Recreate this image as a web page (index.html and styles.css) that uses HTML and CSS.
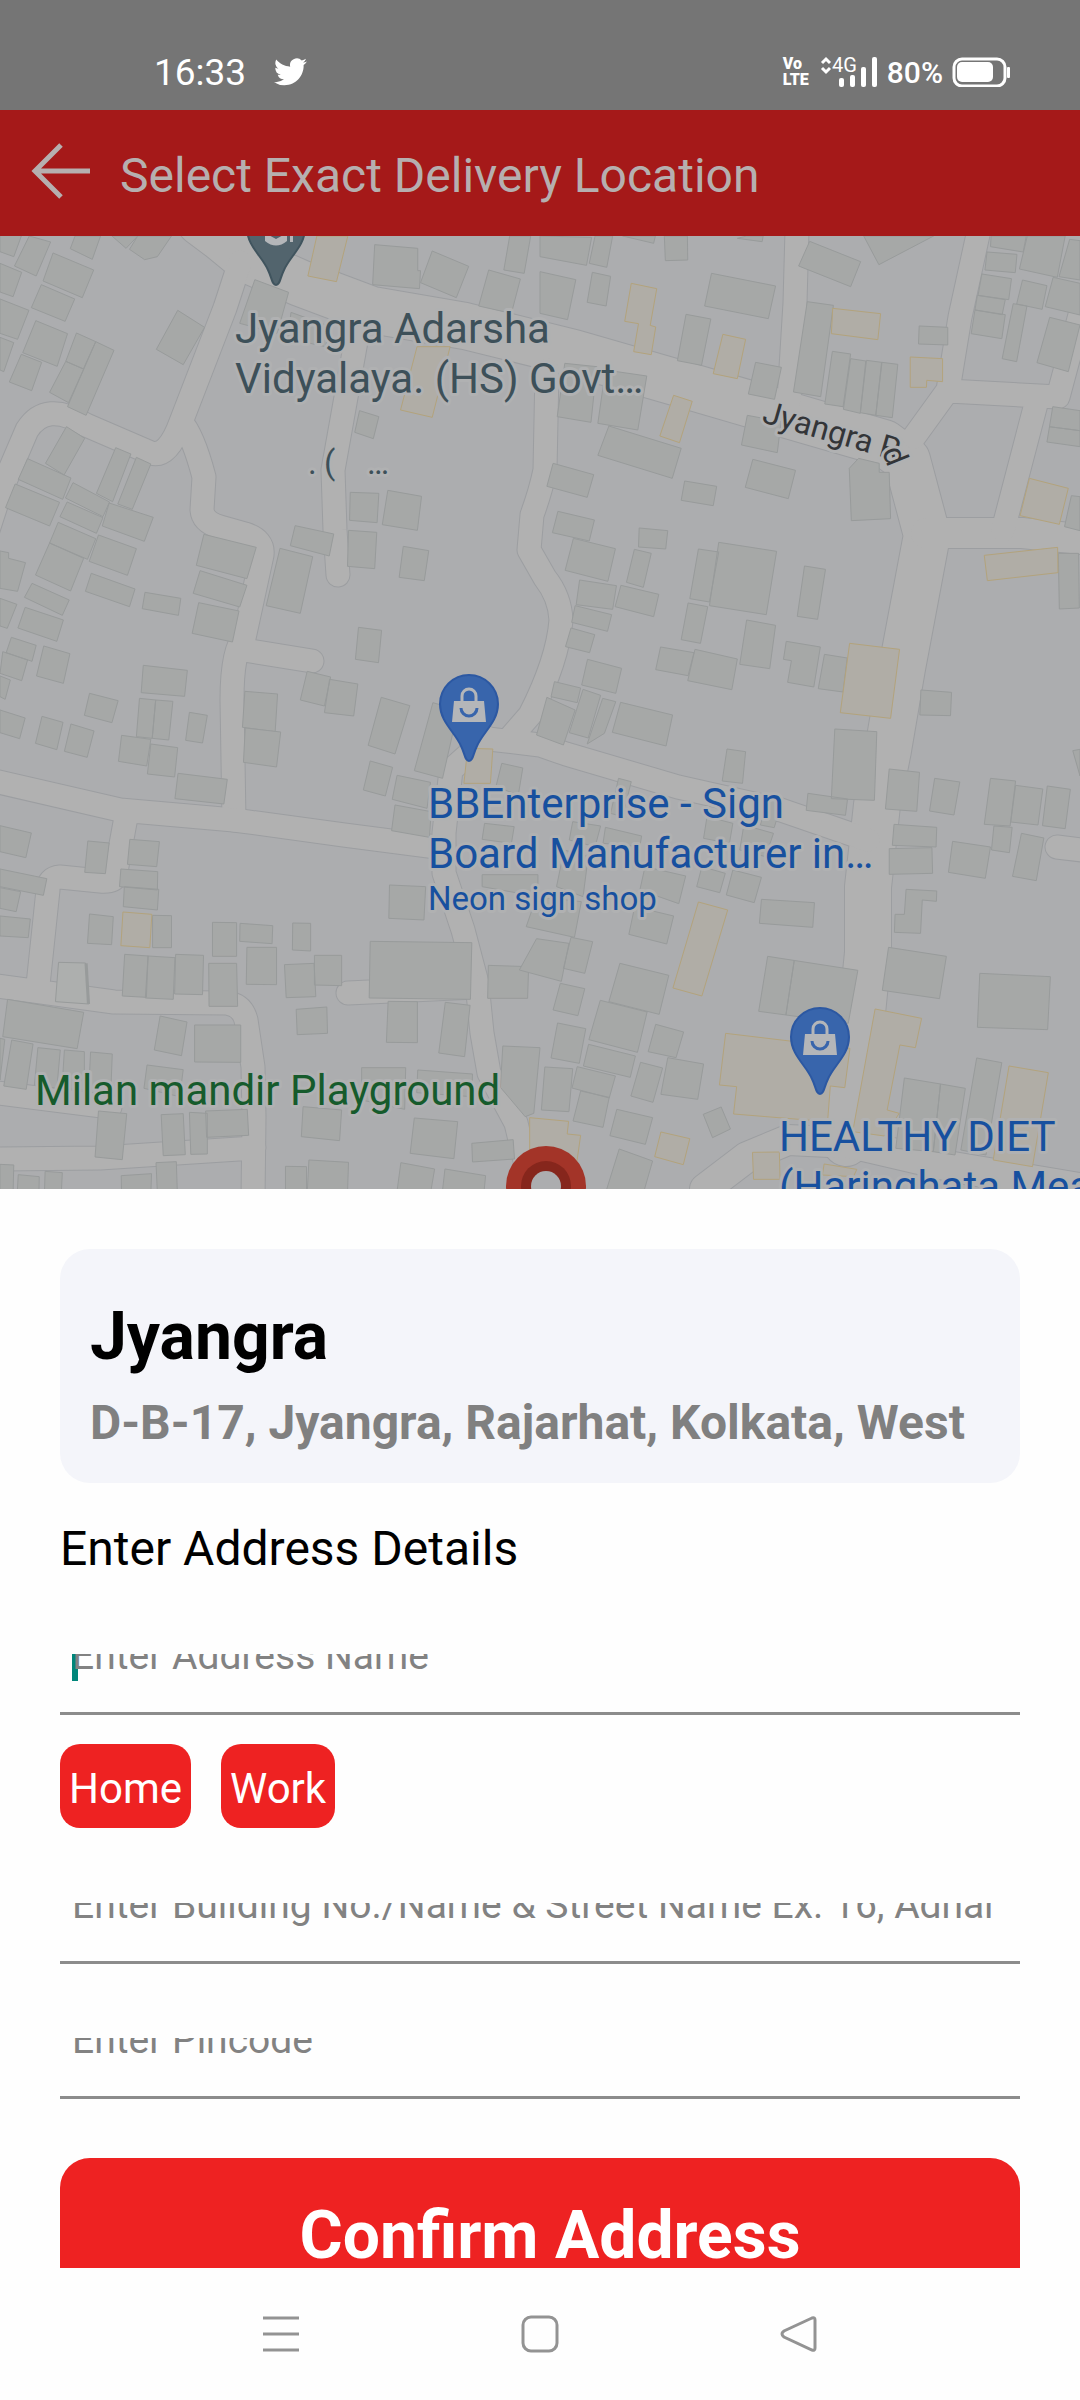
FILE: index.html
```html
<!DOCTYPE html>
<html lang="en">
<head>
<meta charset="utf-8">
<meta name="viewport" content="width=device-width, initial-scale=1">
<title>Select Exact Delivery Location</title>
<link rel="stylesheet" href="styles.css">
</head>
<body>
<div class="status-bar">
  <div class="status-left">
    <time>16:33</time>
    <svg class="bird" viewBox="0 0 24 20" aria-hidden="true"><path d="M23.950 2.400a10 10 0 0 1-2.820.78 4.950 4.950 0 0 0 2.160-2.730c-.95.560-2 .97-3.130 1.190a4.920 4.920 0 0 0-8.380 4.480C7.690 5.920 4.070 3.960 1.640.98a4.920 4.920 0 0 0 1.520 6.570 4.900 4.900 0 0 1-2.230-.61v.06a4.920 4.920 0 0 0 3.950 4.830 5 5 0 0 1-2.210.08 4.940 4.940 0 0 0 4.600 3.420A9.870 9.870 0 0 1 0 17.370a14 14 0 0 0 7.550 2.210c9.050 0 14-7.500 14-13.980 0-.21 0-.42-.02-.63a9.940 9.940 0 0 0 2.420-2.570z"/></svg>
  </div>
  <div class="status-right">
    <span class="volte"><span>Vo</span><span>LTE</span></span>
    <svg class="signal" viewBox="0 0 57 32" aria-hidden="true">
      <path class="arrows" d="M1 7l4-4 4 4M1 12l4 4 4-4"/>
      <text x="11" y="16">4G</text>
      <rect x="18" y="22" width="5" height="9" rx="2"/><rect x="29" y="19" width="5" height="12" rx="2"/><rect x="40" y="11" width="5" height="20" rx="2"/><rect x="51" y="1" width="5" height="30" rx="2"/>
    </svg>
    <span class="charge">80%</span>
    <svg class="battery" viewBox="0 0 58 30" aria-hidden="true"><rect class="case" x="2" y="2" width="51" height="27" rx="8"/><rect x="5" y="5" width="36" height="20" rx="5"/><rect x="55" y="10" width="3" height="11" rx="1"/></svg>
  </div>
</div>
<header class="app-bar">
  <button class="back" type="button" aria-label="Back"><svg viewBox="0 0 60 56"><path d="M58 26H3M29 0L3 26l26 26"/></svg></button>
  <h1>Select Exact Delivery Location</h1>
</header>
<svg class="map" viewBox="0 236 1080 953" preserveAspectRatio="xMidYMid slice" role="img" aria-label="Map of Jyangra">
  <defs>
    <g id="roads">
      <path class="wide" d="M200 222L220 237 248 260 300 283 372 310 465 326 574 353 678 383 815 423 884 443 907 460 927 535 902 668 888 750 877 805 868 887 868 953 860 1033 846 1143"/>
      <path class="mid" d="M705 1189L747 1157 788 1140 850 1143 953 1167 1090 1190M926 533L1022 533 1090 540"/>
      <path d="M240 262L225 308 181 422Q168 458 151 453L86 425Q46 400 27 430L0 493-12 530M181 422Q193 435 204 477L202 510Q203 522 220 527L245 534Q264 540 262 555L244 638Q232 650 232 700L234 820M244 650L312 661"/>
      <path d="M358 330L333 470 335 530 338 575M979 230L960 317 948 390 914 437M948 391L1058 397 1084 300M1037 400L1003 530M797 230L795 303 789 400"/>
      <path d="M547 370L545 470Q541 490 532 515L529 550 545 578Q560 597 561 620 558 660 530 715L510 738M480 738L540 745 566 754 678 787 781 810 868 840M487 738L451 770 444 833 444 873 463 930 477 983 482 1033 489 1073 516 1123 532 1190"/>
      <path d="M-10 780L120 810 234 820 344 835 444 848M126 817L115 877Q113 882 100 881L60 877Q48 878 48 890L38 985M-10 985L114 1002 227 1003Q242 1005 246 1020L253 1067 254 1117 253 1200M-10 1159L100 1158 254 1148M-10 1092L110 1107M348 993L475 987M1057 847L1090 851"/>
    </g>
    <path id="pin" d="M0 57C-4 57-4 50-8 42-14 28-29 18-29 0A29 29 0 0 1 29 0C29 18 14 28 8 42 4 50 4 57 0 57z"/>
    <g id="shop">
      <use href="#pin" class="pin-shop"/>
      <path class="glyph" d="M-15-3H15L17 18H-17z"/>
      <path class="handle" d="M-7-3V-8A7 7 0 0 1 7-8V-3"/>
      <path class="smile" d="M-8 4A8 8 0 0 0 8 4"/>
    </g>
  </defs>
  <rect class="land" x="-600" y="0" width="2400" height="2000"/>
  <use href="#roads" class="road-casing"/>
  <use href="#roads" class="road-fill"/>

  <g transform="translate(0 230) scale(.34439 .33333)">
    <path class="building" d="M0 65 40 80 62 18 0 0zM42 108 105 138 147 36 85 18zM204 56 268 88 292 18 218 18zM325 18 366 55 400 18zM376 58 420 89 457 80 498 18 400 18zM0 100 63 127 38 200 0 186zM154 69 272 120 239 203 125 153zM120 164 217 207 189 274 91 233zM0 207 84 241 51 328 0 310zM104 272 196 311 166 409 66 368zM222 309 278 335 242 417 191 394zM278 335 331 361 250 556 196 530zM191 394 243 417 199 518 144 487zM0 322 40 338 11 425 0 420zM62 373 121 397 92 482 27 456zM516 241 594 292 532 404 454 358zM740 149 838 187 805 310 696 280zM193 590 246 625 186 735 132 700zM336 653 380 672 327 815 280 790zM396 682 438 702 384 838 342 822zM80 686 206 744 182 808 53 748zM44 762 173 817 144 888 16 833zM212 758 318 816 299 860 190 804zM195 816 299 863 280 910 174 860zM317 819 445 862 419 934 297 888zM169 877 278 926 254 988 144 939zM144 939 243 985 205 1083 103 1035zM286 915 396 956 370 1036 259 994zM0 963 25 968 25 985 74 998 51 1084 0 1075zM265 1030 392 1077 376 1130 248 1084zM93 1060 201 1110 181 1156 71 1102zM0 1105 49 1123 21 1195 0 1188zM73 1132 184 1170 165 1234 52 1194zM33 1222 105 1246 93 1294 18 1268zM8 1265 80 1290 63 1352 0 1330zM127 1248 203 1271 184 1360 106 1338zM0 1338 30 1350 15 1408 0 1400zM260 1390 343 1412 325 1478 245 1456zM416 1306 544 1321 536 1399 410 1388zM405 1405 452 1410 442 1525 396 1520zM452 1410 502 1414 490 1530 442 1525zM421 1087 525 1105 518 1156 413 1136zM592 913 744 952 717 1046 570 1006zM581 1022 717 1066 696 1131 561 1090zM577 1118 694 1143 675 1236 558 1210zM711 1384 806 1392 799 1505 704 1492zM813 955 908 980 872 1150 773 1127zM857 887 969 912 956 978 843 947zM1017 787 1100 790 1095 878 1015 871zM1126 781 1224 799 1212 901 1110 884zM1012 901 1094 907 1088 1016 1009 1009zM1171 949 1245 962 1232 1052 1159 1042zM1041 1192 1108 1201 1099 1298 1032 1288zM1044 542 1100 560 1084 626 1030 607zM892 1324 960 1341 942 1428 872 1410zM957 1348 1039 1362 1027 1458 942 1448zM1107 1402 1190 1427 1147 1572 1069 1546zM1088 44 1213 55 1213 122 1221 122 1218 176 1082 164zM1255 63 1361 109 1325 203 1221 158zM1419 120 1511 147 1485 250 1390 228zM1480 18 1541 18 1522 130 1463 120zM1257 1418 1203 1622 1285 1645 1330 1440zM845 247 960 290 945 350 835 325z"/>
    <path class="landmark" d="M920 18 1010 18 977 155 894 138zM1211 350 1307 350 1255 562 1163 540z"/>
  </g>
  <g transform="translate(540 230) scale(.34439 .33333)">
    <path class="building" d="M0 18 150 22 135 106 0 80zM160 18 211 18 194 112 143 100zM240 18 335 18 330 40zM361 18 428 18 429 90 364 92zM573 25 645 35 648 18 600 18zM0 125 104 149 80 269 0 250zM152 127 205 139 192 228 137 217zM498 130 684 168 663 266 478 228zM424 253 496 267 469 406 399 392zM626 397 701 412 681 508 605 492zM783 34 931 95 902 170 751 108zM940 18 984 104 1143 18zM776 215 852 226 815 500 736 486zM849 364 902 372 880 530 827 522zM902 386 946 393 930 550 881 538zM948 391 992 397 975 556 930 548zM993 397 1039 403 1023 563 975 556zM1101 288 1184 292 1184 345 1099 342zM1310 18 1412 18 1403 66 1308 50zM1298 66 1385 73 1380 128 1292 120zM1283 132 1369 146 1361 209 1272 196zM1270 196 1351 209 1342 254 1263 240zM1263 240 1351 254 1341 326 1252 311zM1415 18 1525 18 1502 142 1392 117zM1538 28 1568 32 1568 150 1507 140zM1490 142 1568 160 1568 255 1467 230zM1401 150 1472 167 1458 238 1384 222zM1374 221 1414 228 1384 395 1342 386zM1480 262 1568 285 1534 425 1443 398zM72 400 165 410 148 577 50 560zM190 420 310 438 284 600 168 580zM200 588 410 655 384 745 168 676zM38 700 156 734 137 802 20 769zM420 753 513 769 503 827 410 811zM618 688 742 721 721 806 596 772zM602 556 700 575 689 668 585 645zM925 685 985 700 985 727 1014 727 1018 866 904 872 898 715zM52 844 158 870 143 933 36 908zM288 894 371 902 365 957 286 951zM97 925 219 956 197 1054 73 1021zM274 958 323 970 300 1072 251 1057zM460 957 519 966 492 1116 435 1106zM519 937 687 964 657 1154 492 1127zM768 1008 829 1018 806 1168 747 1159zM115 1050 222 1067 211 1138 105 1124zM235 1066 345 1093 330 1160 218 1130zM102 1127 208 1154 196 1204 92 1177zM90 1194 159 1214 144 1268 74 1250zM430 1119 487 1130 466 1240 410 1229zM600 1170 684 1186 667 1316 580 1303zM350 1251 447 1268 430 1337 336 1319zM450 1258 573 1287 557 1379 429 1352zM138 1288 237 1315 220 1390 121 1365zM715 1234 814 1251 795 1371 719 1357 730 1292 707 1288zM826 1273 892 1284 880 1386 808 1376zM1106 1380 1195 1387 1192 1457 1103 1455zM1489 530 1568 542 1568 650 1472 636zM1478 590 1568 602zM1543 797 1568 800 1568 902 1523 890zM1505 970 1564 970 1566 1134 1508 1137zM42 1355 118 1374 108 1418 32 1400zM20 1402 102 1440 68 1545-10 1515zM125 1378 176 1396 140 1524 85 1508zM182 1405 220 1415 187 1510 137 1542zM234 1417 385 1455 366 1548 210 1507z"/>
    <path class="landmark" d="M265 160 339 176 320 286 336 291 323 374 272 365 286 281 246 274zM531 313 597 328 573 446 503 431zM388 496 442 514 405 638 348 618zM850 235 989 251 981 329 846 311zM1075 381 1169 386 1169 455 1123 451 1122 472 1075 472zM1421 745 1534 775 1508 883 1394 857zM1290 976 1503 952 1504 1028 1299 1052zM899 1240 1044 1258 1018 1465 872 1448z"/>
  </g>
  <g transform="translate(0 700) scale(.34439 .33333)">
    <path class="building" d="M0 30 73 54 57 116 0 98zM122 49 183 67 165 149 103 130zM206 72 273 93 253 172 187 154zM353 106 438 118 426 198 344 184zM438 132 516 143 507 231 428 222zM550 37 602 46 588 129 539 121zM517 220 660 238 650 312 508 296zM712 84 815 96 803 201 707 187zM1075 183 1140 202 1119 288 1055 270zM1153 226 1250 247 1240 325 1139 298zM1147 315 1252 335 1247 412 1137 392zM0 377 91 399 75 473 0 455zM255 423 317 429 306 521 246 517zM377 418 463 425 455 500 370 493zM351 507 458 515 457 570 347 560zM361 560 461 568 457 630 358 620zM0 507 136 536 126 586 0 560zM0 563 60 575 47 635 0 625zM0 648 88 657 82 713 0 708zM260 642 329 650 324 734 254 730zM443 646 498 647 498 743 443 743zM617 667 687 668 687 769 617 769zM697 670 792 677 790 731 696 724zM850 669 902 670 902 753 849 750zM717 742 803 742 803 854 715 853zM362 763 430 768 425 892 355 888zM430 768 508 773 503 898 422 894zM510 763 591 766 588 884 507 882zM606 790 687 790 690 919 607 919zM826 794 912 790 917 890 831 893zM913 766 992 766 992 857 913 855zM1131 555 1236 560 1231 660 1129 655zM1075 724 1370 728 1366 898 1072 894zM1418 796 1535 800 1532 895 1416 895zM22 898 243 937 224 1046 8 1010zM465 948 543 966 527 1067 448 1050zM565 975 699 975 699 1087 565 1086zM860 928 949 921 951 1000 863 1004zM1127 904 1212 905 1212 1028 1122 1027zM1293 907 1365 916 1349 1070 1274 1059zM0 1015 14 1018 0 1140zM34 1020 96 1032 76 1168 11 1158zM110 1043 175 1050 165 1165 100 1155zM187 1050 245 1055 245 1170 180 1165zM263 1056 326 1062 322 1170 258 1165zM427 1095 532 1109 522 1190 418 1165zM1050 1103 1178 1103 1175 1228 1050 1200zM1213 1110 1372 1122 1370 1190 1210 1178zM1460 1038 1568 1043 1550 1240 1525 1250 1453 1162zM286 1233 368 1241 355 1379 276 1371zM468 1244 532 1241 538 1364 474 1367zM550 1237 602 1240 602 1362 554 1363zM597 1233 718 1228 722 1306 600 1312zM880 1220 992 1230 986 1322 875 1310zM1203 1254 1329 1265 1318 1376 1191 1360zM1370 1330 1490 1319 1494 1377 1372 1386zM453 1388 512 1385 515 1480 457 1480zM352 1427 440 1421 438 1480 353 1480zM0 1393 40 1395 38 1480 0 1480zM53 1424 114 1430 113 1480 50 1480zM131 1414 181 1418 178 1480 129 1480zM829 1399 890 1400 890 1480 829 1480zM897 1380 1012 1387 1009 1480 892 1480zM1164 1388 1262 1407 1250 1480 1152 1480zM1292 1407 1410 1427 1405 1480 1284 1480zM1457 190 1518 204 1505 285 1440 260zM1407 370 1493 380 1485 430 1400 418zM1400 524 1562 524 1562 590 1400 560z"/>
    <path class="building pale" d="M170 787 248 789 258 912 161 905z"/>
    <path class="edge" d="M250 790 257 912"/>
    <path class="landmark" d="M357 636 441 643 435 743 351 737zM1358 145 1431 147 1424 250 1347 250z"/>
  </g>
  <g transform="translate(540 700) scale(.34439 .33333)">
    <path class="building" d="M543 147 597 155 588 250 529 243zM856 87 978 95 971 301 846 296zM778 280 893 297 887 346 773 331zM1014 207 1102 217 1094 334 1003 327zM1146 235 1219 246 1202 345 1131 333zM1308 235 1381 243 1365 378 1290 373zM1381 256 1460 267 1446 375 1367 366zM1473 258 1540 268 1525 386 1459 377zM1028 373 1152 382 1150 441 1023 436zM1014 446 1138 443 1140 520 1014 523zM1198 424 1308 441 1293 535 1186 517zM1318 378 1371 382 1363 458 1311 450zM1398 400 1463 414 1441 542 1372 529zM1063 568 1152 573 1151 604 1110 600 1105 700 1029 697 1031 643 1058 643zM1547 152 1568 148 1568 228zM1012 742 1180 769 1160 896 994 871zM1277 820 1482 830 1474 989 1270 982zM643 598 797 608 792 682 637 670zM661 769 923 811 895 970 635 934zM738 783 714 945zM232 790 374 826 346 943 200 905zM175 901 311 936 283 1057 142 1019zM59 850 130 866 110 947 38 930zM51 969 133 986 114 1090 32 1074zM336 973 417 996 395 1073 314 1055zM141 1033 277 1068 262 1132 126 1098zM292 1087 356 1104 328 1207 264 1188zM371 1073 475 1092 458 1198 351 1183zM108 1100 219 1128 201 1194 93 1164zM14 1101 95 1106 84 1235 4 1230zM118 1173 201 1192 183 1282 96 1263zM223 1228 327 1253 306 1333 203 1307zM526 1221 553 1287 501 1313 474 1243zM230 1347 327 1383 300 1480 190 1480zM90 712 153 725 130 820 68 805zM-10 716 84 730 62 844-60 810zM-10 590 120 605 100 712-40 680zM275 620 388 648 368 732 258 703zM305 500 423 528 403 611 290 570zM470 500 538 520 522 578 455 560zM560 510 643 532 622 608 541 585zM485 350 560 370 550 430 475 415zM95 365 176 378 160 440 85 420zM190 382 295 408 290 440 183 430zM592 375 678 400 655 470 580 450zM228 235 265 245 240 350 205 340zM70 450 140 470 125 590 48 560zM1058 1134 1163 1152 1142 1355 1033 1345zM1163 1152 1235 1165 1205 1365 1142 1355zM1268 1074 1341 1088 1295 1365 1222 1350zM660 300 705 298 680 383 640 375z"/>
    <path class="landmark" d="M460 606 545 630 470 888 386 864zM539 1000 725 1023 900 1045 885 1163 843 1158 835 1265 562 1242 571 1160 521 1155zM973 927 1108 955 1090 1043 1045 1035 1008 1230 1043 1240 1000 1308 908 1295zM1362 1098 1476 1118 1430 1400 1316 1380zM351 1296 435 1316 416 1394 333 1370zM617 1357 695 1356 697 1438 620 1438zM-30 1253 83 1264 79 1302 118 1306 105 1400-30 1380zM825 1392 920 1408 910 1430 820 1425z"/>
  </g>

  <g transform="translate(276 228)">
    <use href="#pin" class="pin-school"/>
    <path class="glyph" d="M-11 5L0 11 11 5V13Q0 22-11 13zM14-5H17V14H14z"/>
  </g>
  <use href="#shop" x="469" y="704"/>
  <use href="#shop" x="820" y="1037"/>
  <g transform="translate(546 1186)">
    <circle class="marker" r="40"/><circle class="marker-ring" r="25"/><circle class="land" r="15"/>
  </g>

  <g class="label school">
    <text x="235" y="343">Jyangra Adarsha</text>
    <text x="235" y="393">Vidyalaya. (HS) Govt…</text>
    <text class="small" x="308" y="474">.</text><text class="small" x="324" y="474">(</text><text class="small" x="367" y="474">…</text>
  </g>
  <g class="label shop">
    <text x="428" y="818">BBEnterprise - Sign</text>
    <text x="428" y="868">Board Manufacturer in…</text>
    <text class="small" x="428" y="910">Neon sign shop</text>
    <text x="779" y="1151">HEALTHY DIET</text>
    <text x="779" y="1201">(Haringhata Meat)</text>
  </g>
  <g class="label park"><text x="35" y="1105">Milan mandir Playground</text></g>
  <g class="label street"><text transform="translate(761 422) rotate(16)">Jyangra R<tspan x="124" y="-5" rotate="52">d</tspan></text></g>
</svg>
<main class="sheet">
  <section class="place">
    <h2>Jyangra</h2>
    <p>D-B-17, Jyangra, Rajarhat, Kolkata, West</p>
  </section>
  <form class="details">
    <h3>Enter Address Details</h3>
    <div class="field focused"><span class="caret"></span><input type="text" aria-label="Address name" placeholder="Enter Address Name"></div>
    <div class="chips"><button type="button">Home</button><button type="button">Work</button></div>
    <div class="field"><input type="text" aria-label="Building and street" placeholder="Enter Building No./Name &amp; Street Name Ex. 16, Adhar"></div>
    <div class="field"><input type="text" aria-label="Pincode" placeholder="Enter Pincode"></div>
    <button class="confirm" type="submit">Confirm Address</button>
  </form>
</main>
<nav class="system-nav">
  <button type="button" aria-label="Recent apps"><svg viewBox="0 0 36 36"><path d="M0 2H36M0 18H36M0 34H36"/></svg></button>
  <button type="button" aria-label="Home"><svg viewBox="0 0 36 36"><rect x="1" y="1" width="34" height="34" rx="8"/></svg></button>
  <button type="button" aria-label="Back"><svg viewBox="0 0 36 36"><path d="M31 2L3 15Q-1 18 3 21L31 34Q34 35 34 32V4Q34 1 31 2z"/></svg></button>
</nav>
</body>
</html>
```
FILE: styles.css
```css
* { box-sizing: border-box; }

body {
  margin: 0;
  min-height: 100vh;
  display: flex;
  flex-direction: column;
  background: #fefefe;
  font-family: Roboto, "Liberation Sans", sans-serif;
}

h1, h2, h3, p { margin: 0; font-weight: 400; }
button { border: 0; padding: 0; background: none; font-family: inherit; }
svg { display: block; }

/* status bar */
.status-bar {
  height: 110px;
  padding: 34px 70px 0 154px;
  display: flex;
  justify-content: space-between;
  align-items: center;
  background: #757575;
  color: #fff;
}
.status-left, .status-right { display: flex; align-items: center; }
.status-left { gap: 28px; }
.status-left time { font-size: 37px; }
.bird { width: 33px; height: 28px; fill: #fff; }
.volte { display: flex; flex-direction: column; margin-right: 12px; font-size: 16px; font-weight: 900; line-height: 16px; }
.signal { width: 57px; height: 32px; fill: #fff; margin-right: 9px; overflow: visible; }
.signal text { font-size: 20px; }
.arrows { fill: none; stroke: #fff; stroke-width: 3; }
.charge { font-size: 30px; font-weight: 500; margin-right: 9px; }
.battery { width: 58px; height: 30px; fill: #fff; }
.case { fill: none; stroke: #fff; stroke-width: 3; }

/* app bar */
.app-bar {
  height: 126px;
  padding: 0 32px;
  display: flex;
  align-items: center;
  gap: 28px;
  background: #a51919;
  color: #b6afaf;
}
.back svg { width: 60px; height: 56px; fill: none; stroke: #b6afaf; stroke-width: 5; overflow: visible; }
.app-bar h1 { padding-top: 6px; font-size: 48px; line-height: 56px; }

/* map */
.map { flex: 1 1 0; width: 100%; min-height: 400px; }
.land { fill: #acadaf; }
#roads path { fill: none; stroke-width: calc(23px + var(--edge)); stroke-linecap: round; stroke-linejoin: round; }
#roads .wide { stroke-width: calc(46px + var(--edge)); }
#roads .mid { stroke-width: calc(30px + var(--edge)); }
.road-casing { --edge: 2px; stroke: #9c9ea1; }
.road-fill { --edge: 0px; stroke: #b1b1b1; }
.building { fill: #a6a8a7; stroke: #989b9b; vector-effect: non-scaling-stroke; }
.pale { fill: #adafae; }
.edge { fill: none; stroke: #989b9b; stroke-width: 9; }
.landmark { fill: #b0ada6; stroke: #b3a37c; vector-effect: non-scaling-stroke; }
.pin-school { fill: #52646d; stroke: #40545e; stroke-width: 2; }
.pin-shop { fill: #3865ac; stroke: #2c58a2; stroke-width: 2; }
.glyph { fill: #b4b6b9; }
.handle { fill: none; stroke: #b4b6b9; stroke-width: 3; }
.smile { fill: none; stroke: #3865ac; stroke-width: 3; }
.marker { fill: #a33428; }
.marker-ring { fill: #86261c; }
.label { font-size: 42px; stroke: #b0b1b2; stroke-width: 6px; stroke-linejoin: round; paint-order: stroke; }
.label .small { font-size: 33px; }
.label.school { fill: #3d5059; }
.label.shop { fill: #17509f; }
.label.park { fill: #165b2c; }
.label.street { fill: #333538; font-size: 32px; }

/* address sheet */
.sheet { padding: 60px 60px 0; background: #fefefe; }
.place { padding: 48px 30px 32px; border-radius: 30px; background: #f4f5fa; }
.place h2 { margin-bottom: 18px; font-size: 66px; line-height: 80px; font-weight: 700; color: #000; }
.place p { font-size: 48px; line-height: 56px; font-weight: 700; color: #808080; white-space: nowrap; overflow: hidden; }
.details { display: flex; flex-direction: column; padding-top: 38px; }
.details h3 { margin-bottom: 77px; font-size: 48px; line-height: 56px; color: #000; }
.field {
  position: relative;
  height: 61px;
  margin-bottom: 74px;
  display: flex;
  align-items: flex-end;
  overflow: hidden;
  border-bottom: 3px solid #8c8c8c;
}
.field.focused { margin-bottom: 29px; }
.field input {
  position: relative;
  width: 100%;
  height: 84px;
  padding: 0 12px 28px;
  border: 0;
  outline: 0;
  background: none;
  font: 39px/48px Roboto, "Liberation Sans", sans-serif;
}
.field input::placeholder { color: #828282; opacity: 1; }
.caret { position: absolute; left: 12px; top: 0; width: 6px; height: 27px; background: #00867a; }
.chips { display: flex; gap: 30px; margin-bottom: 75px; }
.chips button { height: 84px; padding: 4px 9px 0; border-radius: 20px; background: #ee2222; color: #fff; font-size: 42px; }
.field:last-of-type { margin-bottom: 59px; }
.confirm {
  padding: 46px 0 0 20px;
  border-radius: 30px 30px 0 0;
  background: #ee2222;
  color: #fff;
  font-size: 66px;
  line-height: 64px;
  font-weight: 700;
}

/* system navigation */
.system-nav { height: 132px; padding: 0 14%; display: grid; grid-template-columns: repeat(3, 1fr); place-items: center; }
.system-nav svg { width: 36px; height: 36px; fill: none; stroke: #939393; stroke-width: 3; overflow: visible; }
```
